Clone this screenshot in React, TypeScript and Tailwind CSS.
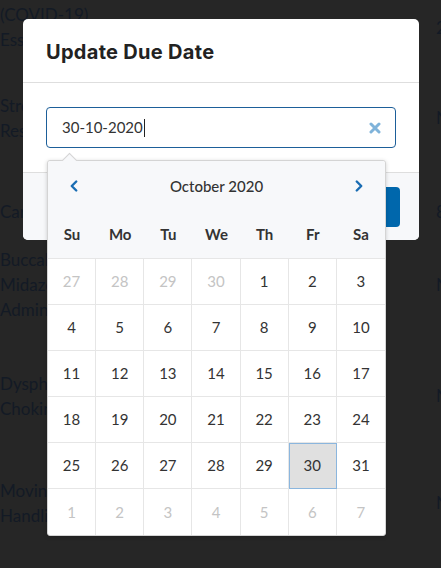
import { ChevronLeft, ChevronRight } from "lucide-react";

const pageRows = [
  { h: "h-[54px]", lines: ["(COVID-19)", "Essential Skills"], mid: "-", pct: "0%", end: "2" },
  { h: "h-[127px]", lines: ["Stress", "Resilience"], mid: "", pct: "", end: "N" },
  { h: "h-[60px]", lines: ["Care Plans"], mid: "", pct: "", end: "8" },
  { h: "h-[86px]", lines: ["Buccal", "Midazolam", "Administration"], mid: "", pct: "", end: "N" },
  { h: "h-[137px]", lines: ["Dysphagia", "Choking"], mid: "", pct: "", end: "N" },
  { h: "h-[77px]", lines: ["Moving", "Handling"], mid: "", pct: "", end: "N" },
];

const weekdays = ["Su", "Mo", "Tu", "We", "Th", "Fr", "Sa"];

const weeks = [
  [27, 28, 29, 30, 1, 2, 3],
  [4, 5, 6, 7, 8, 9, 10],
  [11, 12, 13, 14, 15, 16, 17],
  [18, 19, 20, 21, 22, 23, 24],
  [25, 26, 27, 28, 29, 30, 31],
  [1, 2, 3, 4, 5, 6, 7],
];

function DayCell({ day, muted, selected, lastCol, lastRow }: {
  day: number;
  muted: boolean;
  selected: boolean;
  lastCol: boolean;
  lastRow: boolean;
}) {
  let cls = "flex h-[46px] items-center justify-center border-[#e6e6e6] text-[15px]";
  if (!lastCol) cls += " border-r";
  if (!lastRow) cls += " border-b";
  if (muted) cls += " text-[#c4c4c4]";
  else cls += " text-[#333]";
  if (selected) cls += " bg-[#e0e0e0] outline outline-1 -outline-offset-1 outline-[#8bb6de]";
  return <div className={cls}>{day}</div>;
}

export default function App() {
  return (
    <div className="relative h-[568px] w-[441px] overflow-hidden bg-[#262626] font-['Lato',sans-serif]">
      {/* page behind the dim overlay */}
      <div className="flex flex-col text-[17px] leading-[25px] text-[#131a25]">
        {pageRows.map((row, i) => (
          <div key={i} className={`flex ${row.h} items-center`}>
            <div className="w-[150px] shrink-0">
              {row.lines.map((l) => (
                <div key={l} className="whitespace-nowrap">{l}</div>
              ))}
            </div>
            <div className="w-[200px] shrink-0 pl-[10px]">{row.mid}</div>
            <div className="w-[86px] shrink-0 text-sm">{row.pct}</div>
            <div>{row.end}</div>
          </div>
        ))}
      </div>

      <div className="absolute inset-0">
        <div className="relative ml-[23px] mt-[19px] w-[396px] rounded-[5px] bg-white">
          <div className="flex h-[64px] items-center border-b border-[#dedede] px-[23px] pt-[3px]">
            <h2 className="font-['Inter',sans-serif] text-[20px] font-bold tracking-[0.3px] text-[#222]">
              Update Due Date
            </h2>
          </div>

          <div className="px-[23px] pb-[24px] pt-[24px]">
            <div className="flex h-[41px] items-center rounded-[4px] border border-[#1d5f99] pl-[15px] pr-[14px]">
              <span className="text-[15px] text-[#333]">30-10-2020</span>
              <span className="ml-px h-[18px] w-px bg-[#222]" />
              <svg viewBox="0 0 12 12" className="ml-auto h-[12px] w-[12px]">
                <path d="M2 2 L10 10 M10 2 L2 10" stroke="#7fb3da" strokeWidth="3" strokeLinecap="round" />
              </svg>
            </div>
          </div>

          <div className="flex h-[68px] items-center justify-end rounded-b-[5px] border-t border-[#dedede] bg-[#f7f8fa] px-[19px]">
            <div className="h-[40px] w-[96px] rounded-[4px] bg-[#0067ac]" />
          </div>

          {/* date picker popover */}
          <div className="absolute left-[24px] top-[141px] w-[339px] rounded-[3px] border border-[#d4d4d4] bg-white shadow-[0_1px_4px_rgba(0,0,0,0.18)]">
            <div className="absolute -top-[6px] left-[16px] h-[11px] w-[11px] rotate-45 border-l border-t border-[#d4d4d4] bg-[#f7f8fa]" />
            <div className="relative rounded-t-[3px] bg-[#f7f8fa]">
              <div className="flex h-[50px] items-center justify-between px-[17px]">
                <ChevronLeft size={18} strokeWidth={3.2} className="text-[#1a6db3]" />
                <span className="text-[15px] font-medium text-[#333]">October 2020</span>
                <ChevronRight size={18} strokeWidth={3.2} className="text-[#1a6db3]" />
              </div>
              <div className="grid h-[47px] grid-cols-7 items-center">
                {weekdays.map((d) => (
                  <div key={d} className="text-center text-[15px] font-bold text-[#333]">{d}</div>
                ))}
              </div>
            </div>
            <div className="grid grid-cols-7 border-t border-[#e6e6e6]">
              {weeks.map((week, r) =>
                week.map((day, c) => (
                  <DayCell
                    key={`${r}-${c}`}
                    day={day}
                    muted={(r === 0 && day > 20) || r === 5}
                    selected={r === 4 && day === 30}
                    lastCol={c === 6}
                    lastRow={r === 5}
                  />
                ))
              )}
            </div>
          </div>
        </div>
      </div>
    </div>
  );
}
